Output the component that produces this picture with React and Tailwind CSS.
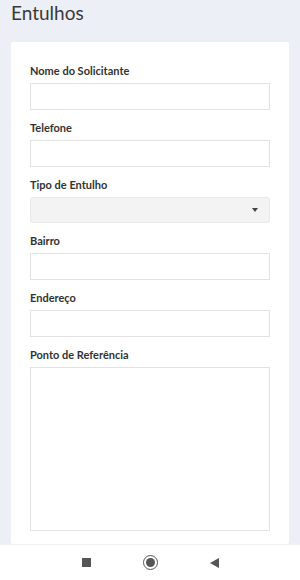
import React from 'react';

const fields = [
    { label: 'Nome do Solicitante', kind: 'input' },
    { label: 'Telefone', kind: 'input' },
    { label: 'Tipo de Entulho', kind: 'select' },
    { label: 'Bairro', kind: 'input' },
    { label: 'Endereço', kind: 'input' },
    { label: 'Ponto de Referência', kind: 'textarea' },
];

function Field({ label, kind }) {
    return (
        <div className="flex flex-col">
            <label className="text-[11px] leading-4 font-bold text-[#333] mb-1">{label}</label>
            {kind === 'input' && (
                <input className="h-[27px] w-full border border-[#e2e2e2] bg-white outline-none" />
            )}
            {kind === 'select' && (
                <div className="h-[26px] w-full rounded-[3px] border border-[#e8e8e8] bg-[#f3f3f3] flex items-center justify-end pr-[11px]">
                    <svg width="6" height="4" viewBox="0 0 6 4">
                        <path d="M0 0 L6 0 L3 4 Z" fill="#444" />
                    </svg>
                </div>
            )}
            {kind === 'textarea' && (
                <textarea className="h-[164px] w-full border border-[#e2e2e2] bg-white outline-none resize-none" />
            )}
        </div>
    );
}

export default function App() {
    return (
        <div className="w-[300px] h-[580px] bg-[#eceff5] flex flex-col overflow-hidden" style={{ fontFamily: 'Lato, "Noto Sans", sans-serif' }}>
            <div className="flex-1 overflow-hidden">
                <h1 className="px-[11px] pt-[1px] text-[19px] leading-[24px] text-[#3a3a3a] font-normal">Entulhos</h1>
                <div className="mx-[11px] mt-[17px] bg-white rounded-[2px] px-[19px] pt-[21px] pb-[13px] flex flex-col gap-[10px]">
                    {fields.map((f) => (
                        <Field key={f.label} label={f.label} kind={f.kind} />
                    ))}
                </div>
            </div>
            <div className="h-[36px] bg-white border-t border-[#f0f0f0] flex items-center justify-center gap-[52px] shrink-0">
                <div className="w-[9px] h-[9px] bg-[#555]" />
                <div className="w-[15px] h-[15px] rounded-full border-[1.5px] border-[#555] flex items-center justify-center">
                    <div className="w-[9px] h-[9px] rounded-full bg-[#555]" />
                </div>
                <svg width="9" height="10" viewBox="0 0 9 10">
                    <path d="M9 0 L9 10 L0 5 Z" fill="#555" />
                </svg>
            </div>
        </div>
    );
}
